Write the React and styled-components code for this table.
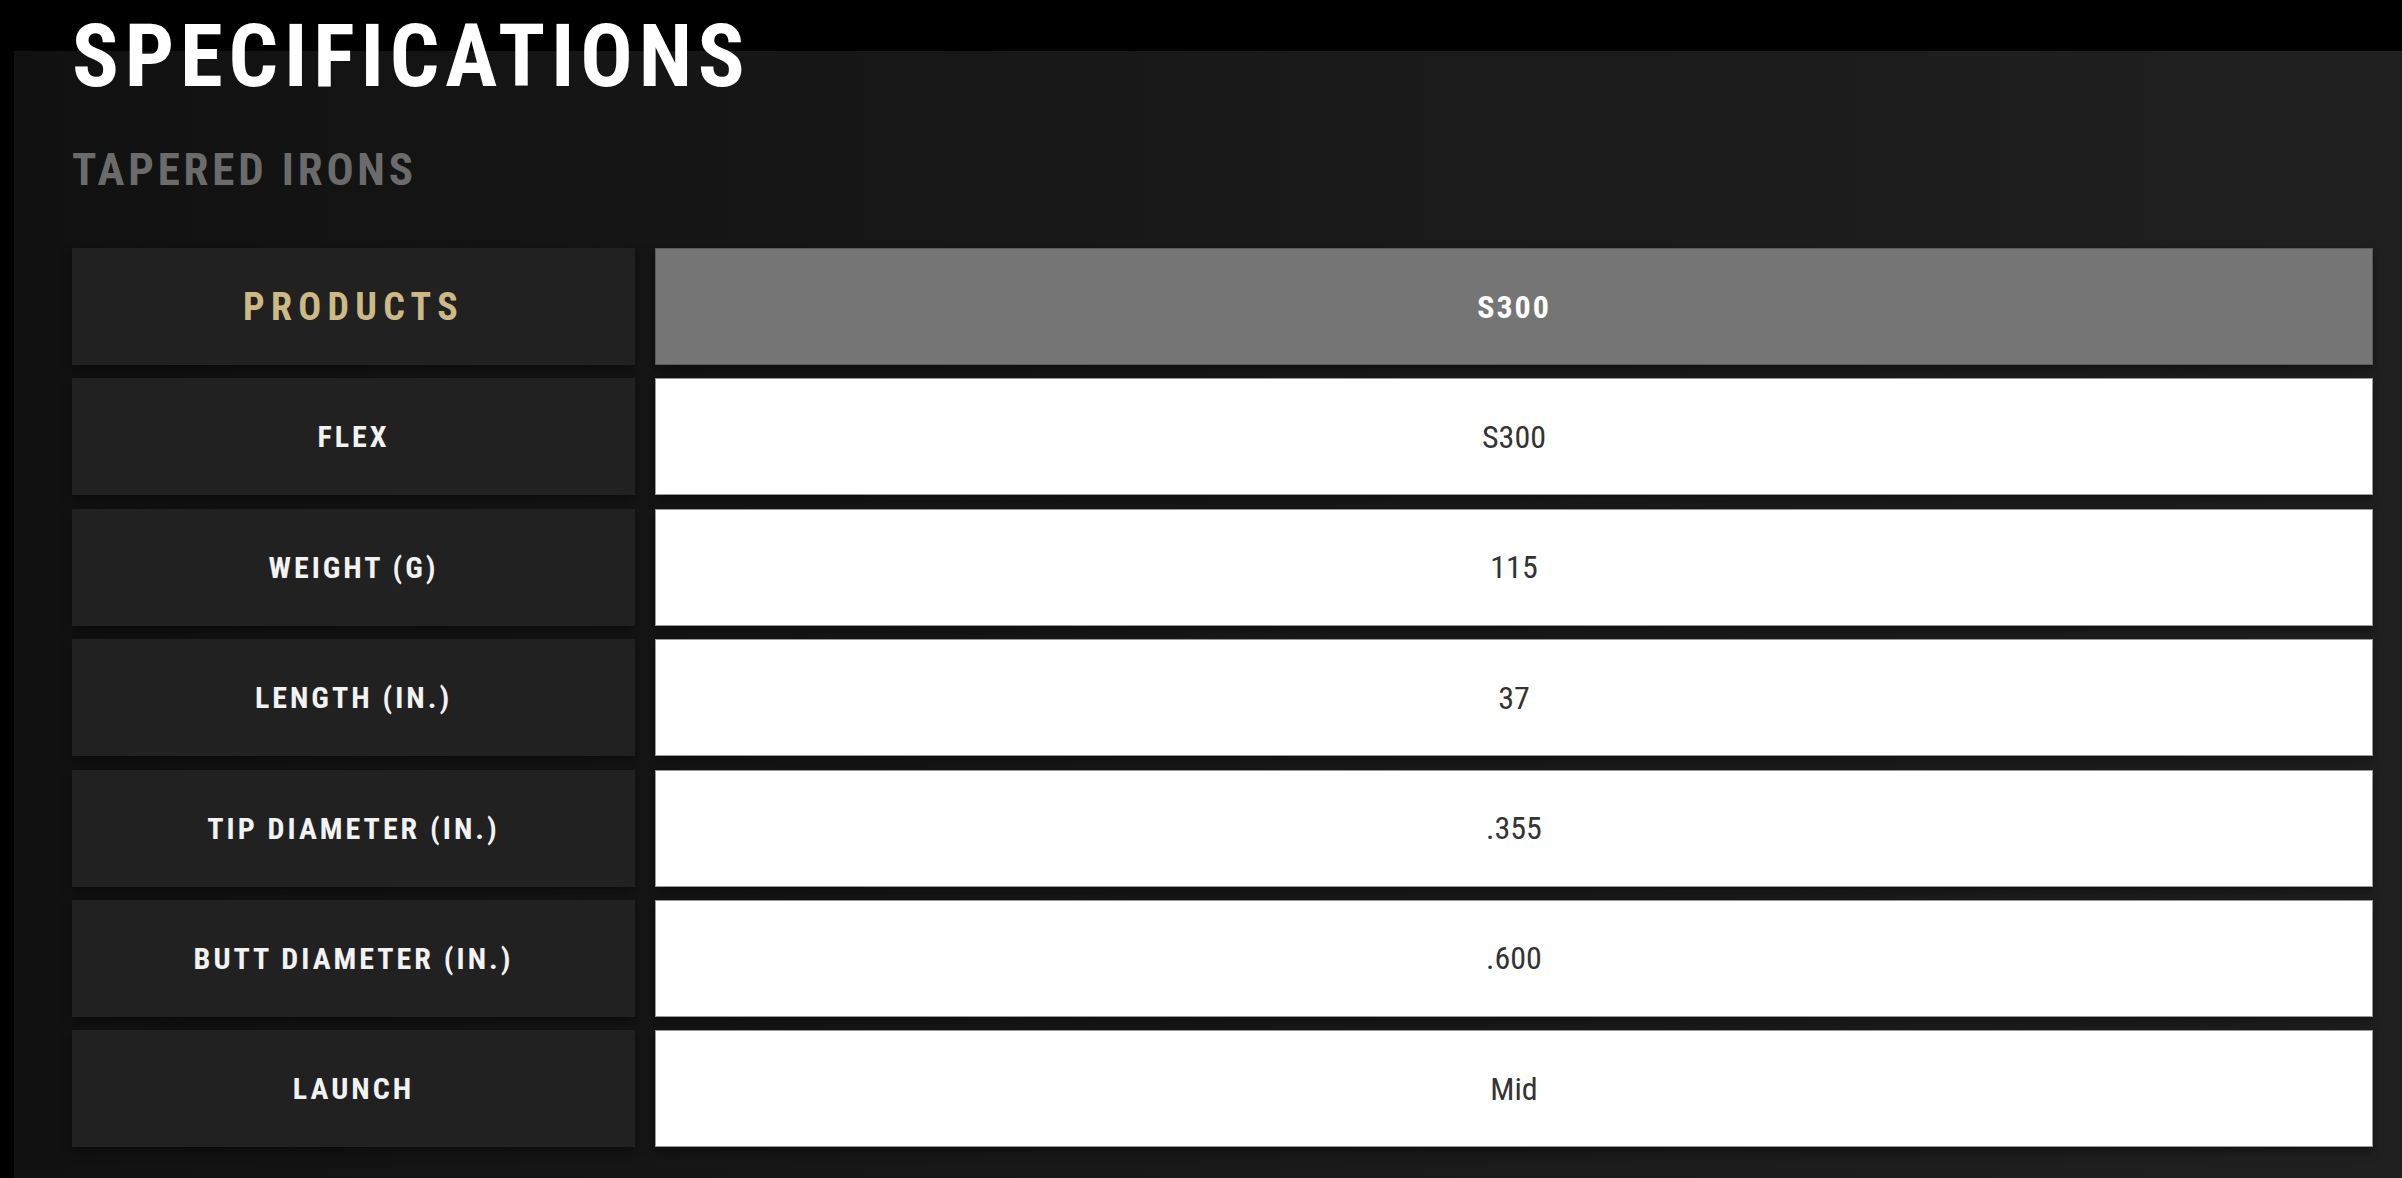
import React from "react";
import styled, { createGlobalStyle } from "styled-components";

const GlobalStyle = createGlobalStyle`
    html, body {
        margin: 0;
        padding: 0;
        background: #000;
    }
    body {
        font-family: "Roboto Condensed", "Roboto", "Liberation Sans", sans-serif;
        font-stretch: 80%;
        -webkit-font-smoothing: antialiased;
    }
`;

const Page = styled.div`
    min-height: 100vh;
    padding: 51px 0 0 14px;
    box-sizing: border-box;
    display: flex;
`;

const Panel = styled.section`
    flex: 1;
    background: linear-gradient(90deg, #111111 0%, #181818 45%, #202020 100%);
    padding: 0 29px 30px 58px;
`;

const Title = styled.h1`
    margin: -38px 0 0;
    font-size: 87px;
    line-height: 1;
    font-weight: 700;
    letter-spacing: 0.067em;
    color: #fff;
    text-transform: uppercase;
`;

const Subtitle = styled.h2`
    margin: 47px 0 0;
    font-size: 45px;
    line-height: 1;
    font-weight: 700;
    letter-spacing: 0.085em;
    color: #6b6b6b;
    text-transform: uppercase;
`;

const SpecGrid = styled.div`
    margin-top: 56px;
    display: grid;
    grid-template-columns: 563px 1fr;
    grid-auto-rows: 117px;
    column-gap: 20px;
    row-gap: 13.4px;
`;

const Label = styled.div`
    display: flex;
    align-items: center;
    justify-content: center;
    background: #212121;
    box-shadow: 0 4px 10px rgba(0, 0, 0, 0.45);
    color: ${({ $head }) => ($head ? "#cdb985" : "#f2f2f2")};
    font-size: ${({ $head }) => ($head ? "38px" : "30px")};
    letter-spacing: ${({ $head }) => ($head ? "0.165em" : "0.1em")};
    font-weight: 700;
    text-transform: uppercase;
`;

const Value = styled.div`
    display: flex;
    align-items: center;
    justify-content: center;
    box-sizing: border-box;
    background: ${({ $head }) => ($head ? "#757575" : "#fff")};
    border: 1px solid ${({ $head }) => ($head ? "#5a5a5a" : "#9a9a9a")};
    box-shadow: 0 4px 10px rgba(0, 0, 0, 0.45);
    color: ${({ $head }) => ($head ? "#fff" : "#333")};
    font-size: 32px;
    font-weight: ${({ $head }) => ($head ? 700 : 400)};
    letter-spacing: ${({ $head }) => ($head ? "0.06em" : "0")};
`;

const specs = [
    ["Flex", "S300"],
    ["Weight (g)", "115"],
    ["Length (in.)", "37"],
    ["Tip Diameter (in.)", ".355"],
    ["Butt Diameter (in.)", ".600"],
    ["Launch", "Mid"],
];

export default function App() {
    return (
        <>
            <GlobalStyle />
            <Page>
                <Panel>
                    <Title>Specifications</Title>
                    <Subtitle>Tapered Irons</Subtitle>
                    <SpecGrid>
                        <Label $head>Products</Label>
                        <Value $head>S300</Value>
                        {specs.map(([name, value]) => (
                            <React.Fragment key={name}>
                                <Label>{name}</Label>
                                <Value>{value}</Value>
                            </React.Fragment>
                        ))}
                    </SpecGrid>
                </Panel>
            </Page>
        </>
    );
}
